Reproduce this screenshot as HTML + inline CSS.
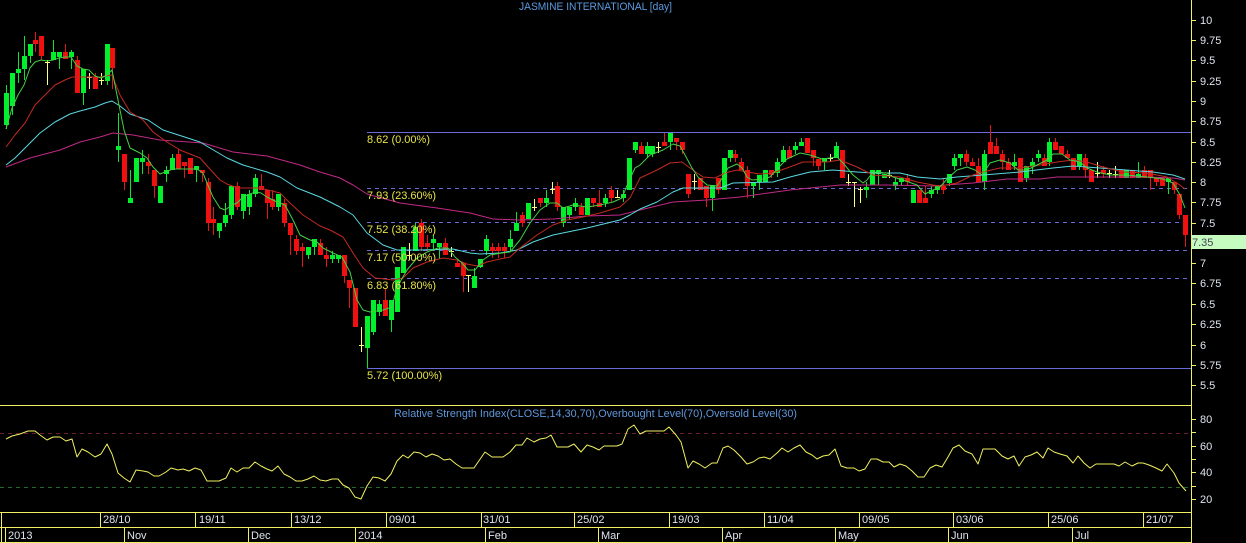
<!DOCTYPE html>
<html><head><meta charset="utf-8"><title>JASMINE INTERNATIONAL [day]</title>
<style>html,body{margin:0;padding:0;background:#000;width:1246px;height:543px;overflow:hidden}svg{display:block}text{font-family:"Liberation Sans",Arial,sans-serif;font-size:11px}</style></head>
<body>
<svg width="1246" height="543" viewBox="0 0 1246 543" xmlns="http://www.w3.org/2000/svg">
<rect width="1246" height="543" fill="#000"/>
<!-- fib lines -->
<g shape-rendering="crispEdges" stroke="#6a6ad8" fill="none">
<path d="M367 132.5H1191M367 368.5H1191"/>
<path stroke-dasharray="4 4" d="M367 188.5H1191M367 222.5H1191M367 250.5H1191M367 278.5H1191"/>
</g>
<!-- candles -->
<g shape-rendering="crispEdges" fill="none">
<path stroke="#10e030" d="M6.5 85V129M12.5 73V115M18.5 52V83M24.5 36V80M30.5 44V63M53.5 40V60M59.5 52V69M71.5 50V69M83.5 69V105M107.5 44V85M118.5 113V162M130.5 170V203M142.5 150V174M166.5 166V182M172.5 154V170M196.5 166V182M219.5 223V238M225.5 203V227M231.5 186V219M243.5 194V219M249.5 190V215M255.5 174V197M278.5 194V211M308.5 247V259M314.5 239V255M332.5 251V263M338.5 255V263M367.5 316V368M373.5 300V335M379.5 300V316M391.5 300V332M415.5 223V251M433.5 235V251M439.5 243V259M474.5 268V288M480.5 259V268M486.5 235V255M510.5 230V251M516.5 212V231M546.5 190V207M563.5 207V227M569.5 207V219M575.5 198V211M605.5 194V207M623.5 190V202M635.5 142V153M647.5 142V158M652.5 146V157M670.5 133V150M712.5 185V211M730.5 150V162M753.5 182V198M759.5 175V190M777.5 158V177M783.5 146V162M795.5 142V154M801.5 138V146M824.5 158V170M836.5 142V158M866.5 182V198M878.5 170V185M895.5 178V190M901.5 178V186M931.5 186V198M937.5 186V194M949.5 174V186M954.5 154V170M960.5 154V166M984.5 150V190M1014.5 154V170M1026.5 166V182M1032.5 158V174M1038.5 150V162M1049.5 138V166M1079.5 154V170M1138.5 162V178M1168.5 178V194"/>
<path stroke="#00f02c" stroke-width="5" d="M6.5 93V125M12.5 73V106M18.5 69V73M24.5 56V69M30.5 44V56M53.5 52V60M59.5 52V57M71.5 52V57M83.5 69V93M107.5 44V81M118.5 146V150M130.5 198V203M136.5 158V182M142.5 158V162M160.5 186V203M166.5 170V174M172.5 158V170M196.5 166V170M219.5 223V231M225.5 215V223M231.5 186V215M243.5 194V211M249.5 194V207M255.5 178V194M278.5 194V207M308.5 247V255M314.5 239V247M332.5 255V259M338.5 255V259M367.5 316V348M373.5 300V332M379.5 304V312M391.5 300V320M397.5 267V312M403.5 247V273M415.5 227V251M433.5 239V243M439.5 243V247M474.5 276V288M480.5 259V267M486.5 239V251M510.5 239V247M516.5 223V231M528.5 203V219M546.5 198V203M563.5 207V223M569.5 207V215M575.5 203V207M587.5 198V215M605.5 198V203M623.5 194V198M629.5 158V190M635.5 142V150M647.5 146V154M652.5 146V154M670.5 133V142M712.5 185V198M724.5 158V190M730.5 150V158M753.5 182V186M759.5 175V182M765.5 170V182M777.5 162V173M783.5 150V162M795.5 146V150M801.5 142V146M824.5 158V162M836.5 146V158M866.5 187V190M872.5 170V185M878.5 170V174M884.5 174V178M895.5 182V186M901.5 178V182M913.5 190V203M931.5 190V194M937.5 186V190M949.5 174V183M954.5 158V166M960.5 154V158M984.5 154V182M1014.5 162V166M1026.5 166V178M1032.5 162V166M1038.5 154V158M1049.5 142V162M1079.5 154V166M1126.5 170V178M1138.5 174V178M1168.5 178V182"/>
<path stroke="#e01818" d="M35.5 32V52M41.5 36V60M65.5 44V59M77.5 56V93M95.5 73V89M112.5 48V89M124.5 154V190M148.5 154V174M154.5 170V198M178.5 149V169M184.5 162V178M202.5 170V182M208.5 178V231M213.5 207V235M237.5 182V210M261.5 174V190M267.5 190V219M272.5 190V210M284.5 199V227M290.5 223V255M296.5 235V255M302.5 243V267M320.5 239V255M326.5 247V267M344.5 255V283M349.5 280V308M385.5 288V316M421.5 219V251M427.5 235V251M445.5 238V255M457.5 259V267M463.5 263V292M492.5 243V258M498.5 243V258M504.5 243V258M522.5 212V227M540.5 198V207M557.5 182V211M581.5 203V215M593.5 198V207M599.5 190V207M611.5 186V202M641.5 142V154M664.5 133V146M676.5 138V150M682.5 142V154M688.5 174V198M706.5 186V207M718.5 178V194M735.5 150V162M741.5 158V170M747.5 166V198M771.5 170V178M789.5 146V158M813.5 150V166M818.5 159V170M907.5 174V186M925.5 186V203M943.5 178V194M966.5 150V166M972.5 158V166M978.5 158V182M990.5 125V154M996.5 138V154M1002.5 150V170M1008.5 158V170M1044.5 154V166M1055.5 138V150M1061.5 146V154M1067.5 150V158M1085.5 154V178M1103.5 166V178M1144.5 166V178M1150.5 170V190M1156.5 178V186M1174.5 182V194M1179.5 194V219M1185.5 215V247"/>
<path stroke="#f01010" stroke-width="5" d="M35.5 40V44M41.5 36V56M65.5 52V59M77.5 60V93M95.5 77V89M112.5 48V68M124.5 154V182M148.5 162V166M154.5 170V186M178.5 154V169M184.5 162V166M190.5 158V174M202.5 170V173M208.5 182V223M213.5 219V223M237.5 186V207M261.5 186V190M267.5 190V203M272.5 199V207M284.5 203V223M290.5 223V235M296.5 239V251M302.5 247V251M320.5 243V255M326.5 255V259M344.5 255V276M349.5 280V288M355.5 288V327M385.5 300V316M421.5 223V247M427.5 243V247M445.5 243V255M457.5 263V267M463.5 263V276M492.5 247V251M498.5 247V251M504.5 247V251M522.5 215V223M540.5 198V203M557.5 186V207M581.5 207V215M593.5 198V203M599.5 203V207M611.5 190V198M641.5 146V154M664.5 142V146M676.5 138V142M682.5 142V150M688.5 174V194M700.5 178V190M706.5 186V198M718.5 178V190M735.5 154V158M741.5 162V170M747.5 170V186M771.5 170V175M789.5 150V158M807.5 138V153M813.5 150V158M818.5 159V166M842.5 150V178M907.5 178V182M919.5 190V203M925.5 198V203M943.5 186V190M966.5 154V162M972.5 162V166M978.5 166V182M990.5 142V154M996.5 146V154M1002.5 154V162M1008.5 162V170M1020.5 158V182M1044.5 158V166M1055.5 142V150M1061.5 146V154M1067.5 154V158M1073.5 158V170M1085.5 158V170M1091.5 170V182M1103.5 170V174M1121.5 170V178M1132.5 170V178M1144.5 170V178M1150.5 170V178M1156.5 178V182M1162.5 178V186M1174.5 182V190M1179.5 194V215M1185.5 215V235"/>
<path stroke="#ffff80" d="M47.5 60V85M45 62.5H50M89.5 73V89M87 77.5H92M101.5 73V85M99 80.5H104M361.5 327V352M359 345.5H364M409.5 243V260M407 255.5H412M451.5 247V257M449 251.5H454M468.5 275V292M466 275.5H471M534.5 199V211M532 207.5H537M552.5 182V194M550 189.5H555M617.5 190V197M615 197.5H620M658.5 142V153M656 147.5H661M694.5 174V190M692 181.5H697M830.5 154V162M828 158.5H833M848.5 174V186M846 182.5H851M854.5 182V207M852 182.5H857M860.5 187V203M858 189.5H863M889.5 170V178M887 175.5H892M1097.5 162V178M1095 173.5H1100M1109.5 170V178M1107 173.5H1112M1115.5 166V178M1113 174.5H1118"/>
</g>
<!-- moving averages -->
<g fill="none" stroke-linejoin="round">
<polyline stroke="#c02a84" points="6,167 30,158 60,150 80,142 100,137 113,133 133,135 160,140 203,143 233,152 267,156 300,165 320,172 340,178 353,185 367,194 400,203 437,208 470,213 493,219 520,220 553,219 587,216 620,215 640,210 673,202 707,200 740,197 790,190 840,185 887,185 933,186 973,183 1007,179 1040,179 1057,177 1107,177 1147,177 1173,178 1185,180"/>
<polyline stroke="#5ad8e0" points="6,165 15,158 25,148 40,133 55,122 70,114 80,111 95,107 105,103 112,101 120,106 130,114 148,120 163,130 200,142 210,148 227,158 243,165 267,172 280,177 297,188 320,197 340,207 353,215 367,233 383,245 397,250 420,250 453,249 470,253 480,254 500,253 517,250 533,242 553,235 587,228 620,220 630,215 640,209 657,202 673,192 683,188 720,188 733,183 773,182 790,177 810,172 833,170 857,172 873,173 900,173 917,177 940,179 957,177 983,175 1020,172 1053,168 1073,166 1100,168 1153,172 1173,175 1185,179"/>
<polyline stroke="#c02a20" points="6,147 15,135 25,123 35,105 45,95 55,85 65,80 72,77 85,77 100,77 112,75 120,95 130,112 143,120 153,132 167,142 180,150 200,158 208,167 220,180 227,184 238,188 260,188 280,193 290,203 303,215 320,226 330,230 343,237 353,253 363,268 375,278 393,280 403,278 413,268 427,262 443,258 457,260 467,264 477,266 487,262 500,259 510,257 520,248 537,235 553,225 567,220 583,217 600,213 620,207 630,198 640,178 657,170 670,163 682,162 690,168 703,177 715,178 725,173 737,170 747,172 760,174 773,173 787,168 803,162 827,162 840,160 857,167 873,175 900,177 917,182 933,185 940,186 957,183 973,175 983,172 1000,168 1020,168 1040,165 1057,162 1073,160 1087,162 1103,167 1123,172 1147,173 1167,177 1177,183 1185,189"/>
<polyline stroke="#44d044" points="6,129 8,122 12,108 18,95 24,85 30,68 35,62 41,60 47,61 53,60 59,58 65,57 71,57 77,66 83,69 89,70 95,76 101,78 107,75 112,70 118,100 124,130 130,148 140,153 147,158 153,167 160,174 165,172 173,169 183,169 197,169 203,173 207,183 213,197 220,208 225,210 232,205 237,203 243,197 255,192 261,193 267,197 277,202 285,205 293,220 300,235 310,240 317,242 323,248 333,253 342,257 350,272 357,300 363,310 370,312 383,310 392,307 397,287 407,270 417,258 427,252 438,248 448,248 455,257 462,263 468,270 475,270 483,260 490,255 502,253 510,252 520,240 530,223 540,210 550,203 557,203 563,208 573,205 587,207 600,205 613,202 622,198 628,183 635,168 640,165 650,155 663,150 673,144 680,146 685,155 692,168 698,177 707,185 717,186 723,177 728,168 737,164 742,168 747,177 752,180 763,179 770,177 778,168 787,159 800,153 810,155 822,159 837,157 843,163 853,175 863,183 867,180 873,172 887,173 893,177 903,180 917,185 925,194 933,190 940,187 948,178 957,170 967,167 975,170 982,175 990,163 1000,160 1010,163 1018,170 1027,170 1037,165 1047,160 1053,154 1062,154 1070,160 1080,162 1087,168 1097,172 1110,175 1127,175 1147,177 1163,179 1173,183 1180,195 1185,208"/>
</g>
<!-- fib labels -->
<g fill="#e6e24a">
<text x="367" y="143">8.62 (0.00%)</text>
<text x="367" y="199">7.93 (23.60%)</text>
<text x="367" y="233">7.52 (38.20%)</text>
<text x="367" y="261">7.17 (50.00%)</text>
<text x="367" y="289">6.83 (61.80%)</text>
<text x="367" y="379">5.72 (100.00%)</text>
</g>
<!-- titles -->
<text x="519" y="10" fill="#5a9ae0" textLength="153" lengthAdjust="spacingAndGlyphs">JASMINE INTERNATIONAL [day]</text>
<text x="394" y="417" fill="#5f97dc" textLength="403" lengthAdjust="spacingAndGlyphs">Relative Strength Index(CLOSE,14,30,70),Overbought Level(70),Oversold Level(30)</text>
<!-- RSI -->
<g shape-rendering="crispEdges" fill="none">
<path stroke="#6a2030" stroke-dasharray="4 4" d="M0 433.5H1191"/>
<path stroke="#246a2c" stroke-dasharray="4 4" d="M0 487.5H1191"/>
</g>
<polyline fill="none" stroke="#f0f060" stroke-linejoin="round" points="6,439 12,436 20,434 28,431 35,431 40,435 47,440 53,437 60,437 66,441 72,439 77,457 82,449 88,452 95,457 101,454 107,444 112,454 118,473 124,478 130,482 136,470 143,471 148,472 154,476 159,476 166,472 171,468 178,470 183,469 189,471 195,468 201,470 207,481 219,481 226,478 231,468 237,472 243,468 249,468 255,462 261,466 267,469 272,471 278,466 284,474 290,477 296,481 302,481 308,479 314,476 320,480 326,481 332,479 338,479 343,485 349,488 355,497 361,499 367,486 373,477 379,478 385,481 391,474 397,461 403,455 408,458 414,452 420,453 426,457 432,454 438,456 444,460 450,459 456,464 462,468 474,468 485,452 492,457 503,457 510,452 516,445 522,445 527,438 534,442 540,439 546,438 551,435 557,447 568,447 574,444 581,452 587,445 593,447 599,450 604,446 617,446 622,444 628,429 634,425 640,434 646,431 664,431 669,427 676,435 681,442 688,468 693,461 699,464 705,468 712,463 717,463 723,448 728,446 734,450 741,457 747,464 753,462 759,458 764,457 770,459 777,453 782,448 788,452 794,448 800,445 806,452 812,455 817,459 823,456 829,455 835,449 841,466 847,468 854,468 859,471 865,469 871,459 877,459 883,462 889,462 894,467 900,464 906,466 912,471 918,477 924,477 930,468 936,465 942,467 948,457 953,448 959,445 965,451 972,454 978,464 983,449 995,449 1002,456 1008,459 1014,456 1019,466 1025,457 1031,455 1037,452 1043,458 1048,448 1054,452 1060,454 1067,456 1073,463 1078,456 1084,463 1090,468 1096,464 1114,464 1119,466 1125,462 1132,466 1138,463 1143,463 1149,465 1156,468 1162,471 1167,464 1174,473 1179,483 1186,491"/>
<!-- frame -->
<path shape-rendering="crispEdges" fill="none" stroke="#f0f060" d="M1191.5 0V543M0 405.5H1191M0 512.5H1191M0 527.5H1191M0 542.5H1191M1.5 512V542M5.5 527V542M100.5 512V527M195.5 512V527M291.5 512V527M386.5 512V527M481.5 512V527M574.5 512V527M669.5 512V527M764.5 512V527M859.5 512V527M953.5 512V527M1048.5 512V527M1143.5 512V527M124.5 527V542M248.5 527V542M355.5 527V542M485.5 527V542M598.5 527V542M722.5 527V542M835.5 527V542M948.5 527V542M1072.5 527V542M1192 20.5H1196M1192 40.5H1196M1192 60.5H1196M1192 81.5H1196M1192 101.5H1196M1192 121.5H1196M1192 142.5H1196M1192 162.5H1196M1192 182.5H1196M1192 202.5H1196M1192 223.5H1196M1192 243.5H1196M1192 263.5H1196M1192 283.5H1196M1192 304.5H1196M1192 324.5H1196M1192 345.5H1196M1192 365.5H1196M1192 385.5H1196M1192 419.5H1196M1192 432.5H1196M1192 446.5H1196M1192 459.5H1196M1192 472.5H1196M1192 486.5H1196M1192 499.5H1196"/>
<!-- axis labels -->
<g fill="#dfe4ee">
<text x="1200" y="24">10</text><text x="1200" y="44">9.75</text><text x="1200" y="64">9.5</text><text x="1200" y="85">9.25</text><text x="1200" y="105">9</text><text x="1200" y="125">8.75</text><text x="1200" y="146">8.5</text><text x="1200" y="166">8.25</text><text x="1200" y="186">8</text><text x="1200" y="206">7.75</text><text x="1200" y="227">7.5</text><text x="1200" y="267">7</text><text x="1200" y="287">6.75</text><text x="1200" y="308">6.5</text><text x="1200" y="328">6.25</text><text x="1200" y="349">6</text><text x="1200" y="369">5.75</text><text x="1200" y="389">5.5</text>
<text x="1200" y="423">80</text><text x="1200" y="450">60</text><text x="1200" y="476">40</text><text x="1200" y="503">20</text>
<text x="103" y="523">28/10</text><text x="199" y="523">19/11</text><text x="294" y="523">13/12</text><text x="389" y="523">09/01</text><text x="483" y="523">31/01</text><text x="577" y="523">25/02</text><text x="672" y="523">19/03</text><text x="767" y="523">11/04</text><text x="862" y="523">09/05</text><text x="956" y="523">03/06</text><text x="1051" y="523">25/06</text><text x="1146" y="523">21/07</text>
<text x="8" y="539">2013</text><text x="127" y="539">Nov</text><text x="251" y="539">Dec</text><text x="358" y="539">2014</text><text x="488" y="539">Feb</text><text x="601" y="539">Mar</text><text x="725" y="539">Apr</text><text x="838" y="539">May</text><text x="951" y="539">Jun</text><text x="1075" y="539">Jul</text>
</g>
<rect x="1192" y="235" width="54" height="14" fill="#c6fcc0"/>
<text x="1192" y="246" fill="#445">7.35</text>
</svg>
</body></html>
